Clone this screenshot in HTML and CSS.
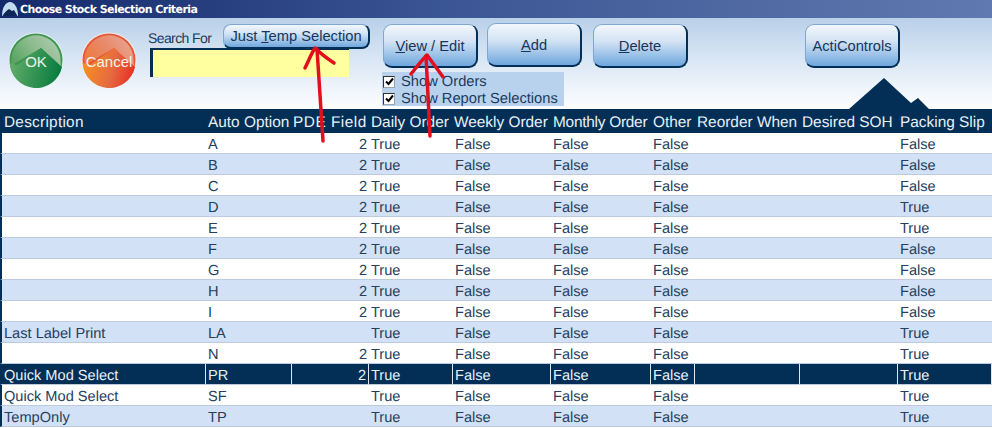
FILE: index.html
```html
<!DOCTYPE html>
<html lang="en">
<head>
<meta charset="utf-8">
<title>Choose Stock Selection Criteria</title>
<link rel="stylesheet" href="styles.css">
</head>
<body>
<div class="window">
  <div class="titlebar">
    <svg class="app-icon" width="18" height="16" viewBox="0 0 18 16"><path d="M1 15C1 6 5 1 9 1s8 5 8 14z" fill="#c3dbef"/><path d="M1.500 15C3 12 5 10 8 8l3 2 2-1 3.500 6z" fill="#0c2658"/></svg>
    <span class="title-text">Choose Stock Selection Criteria</span>
  </div>
  <div class="toolbar">
    <button class="round ok">
      <svg class="round-art" width="56" height="56" viewBox="0 0 56 56">
        <defs>
          <linearGradient id="okBase" x1="0" y1="0.5" x2="1" y2="0.7"><stop offset="0" stop-color="#62ad68"/><stop offset="0.55" stop-color="#2d9050"/><stop offset="1" stop-color="#04793e"/></linearGradient>
          <linearGradient id="okGloss" x1="0" y1="0.7" x2="1" y2="0.2"><stop offset="0" stop-color="#5aa562"/><stop offset="0.5" stop-color="#8ebc90"/><stop offset="1" stop-color="#aecbae"/></linearGradient>
        </defs>
        <circle cx="28" cy="28" r="27.500" fill="#e6eff6"/>
        <circle cx="28" cy="28" r="26.500" fill="#3f9650"/>
        <path d="M8.500 13A24.500 24.500 0 0 1 52.500 28L53 35 33 16 4 33A24.500 24.500 0 0 1 8.500 13z" fill="url(#okGloss)"/>
        <path d="M33 16L54 35A26.500 26.500 0 0 1 1.600 31L9 33z" fill="url(#okBase)"/>
      </svg>
      <span class="round-label">OK</span>
    </button>
    <button class="round cancel">
      <svg class="round-art" width="56" height="56" viewBox="0 0 56 56">
        <defs>
          <linearGradient id="noBase" x1="0" y1="0.5" x2="1" y2="0.7"><stop offset="0" stop-color="#f69020"/><stop offset="0.55" stop-color="#e66a40"/><stop offset="1" stop-color="#e62c24"/></linearGradient>
          <linearGradient id="noGloss" x1="0" y1="0.7" x2="1" y2="0.2"><stop offset="0" stop-color="#ee7a3c"/><stop offset="0.5" stop-color="#e88a6c"/><stop offset="1" stop-color="#e8a894"/></linearGradient>
        </defs>
        <circle cx="28" cy="28" r="27.500" fill="#f2eeee"/>
        <circle cx="28" cy="28" r="26.500" fill="#e4583a"/>
        <path d="M8.500 13A24.500 24.500 0 0 1 52.500 28L53 35 33 16 4 33A24.500 24.500 0 0 1 8.500 13z" fill="url(#noGloss)"/>
        <path d="M33 16L54 35A26.500 26.500 0 0 1 1.600 31L9 33z" fill="url(#noBase)"/>
      </svg>
      <span class="round-label">Cancel</span>
    </button>
    <div class="search">
      <div class="search-top">
        <label class="search-label">Search For</label>
        <button class="btn small">Just <u>T</u>emp Selection</button>
      </div>
      <div class="search-input"></div>
    </div>
    <div class="middle">
      <div class="btn-row">
        <button class="btn big"><u>V</u>iew / Edit</button>
        <button class="btn big raised"><u>A</u>dd</button>
        <button class="btn big delete"><u>D</u>elete</button>
      </div>
      <div class="checks">
        <div class="check"><span class="box"><svg width="9" height="9" viewBox="0 0 9 9"><path d="M1 4.500l2.500 2.500L8 1.500" fill="none" stroke="#000" stroke-width="2"/></svg></span>Show Orders</div>
        <div class="check"><span class="box"><svg width="9" height="9" viewBox="0 0 9 9"><path d="M1 4.500l2.500 2.500L8 1.500" fill="none" stroke="#000" stroke-width="2"/></svg></span>Show Report Selections</div>
      </div>
    </div>
    <button class="btn big acti">ActiControls</button>
    <svg class="mountain" width="82" height="32" viewBox="0 0 82 32"><path d="M0 32L35 1 62 26 69 21 80 32z" fill="#032f56"/></svg>
  </div>
  <table class="grid">
    <colgroup>
      <col class="c1"><col class="c2"><col class="c3"><col class="c4"><col class="c5"><col class="c6"><col class="c7"><col class="c8"><col class="c9"><col class="c10">
    </colgroup>
    <thead>
      <tr><th>Description</th><th>Auto Option</th><th>PDE Field</th><th>Daily Order</th><th>Weekly Order</th><th>Monthly Order</th><th>Other</th><th>Reorder When</th><th>Desired SOH</th><th>Packing Slip</th></tr>
    </thead>
    <tbody>
      <tr><td></td><td>A</td><td class="num">2</td><td>True</td><td>False</td><td>False</td><td>False</td><td></td><td></td><td>False</td></tr>
      <tr><td></td><td>B</td><td class="num">2</td><td>True</td><td>False</td><td>False</td><td>False</td><td></td><td></td><td>False</td></tr>
      <tr><td></td><td>C</td><td class="num">2</td><td>True</td><td>False</td><td>False</td><td>False</td><td></td><td></td><td>False</td></tr>
      <tr><td></td><td>D</td><td class="num">2</td><td>True</td><td>False</td><td>False</td><td>False</td><td></td><td></td><td>True</td></tr>
      <tr><td></td><td>E</td><td class="num">2</td><td>True</td><td>False</td><td>False</td><td>False</td><td></td><td></td><td>True</td></tr>
      <tr><td></td><td>F</td><td class="num">2</td><td>True</td><td>False</td><td>False</td><td>False</td><td></td><td></td><td>False</td></tr>
      <tr><td></td><td>G</td><td class="num">2</td><td>True</td><td>False</td><td>False</td><td>False</td><td></td><td></td><td>False</td></tr>
      <tr><td></td><td>H</td><td class="num">2</td><td>True</td><td>False</td><td>False</td><td>False</td><td></td><td></td><td>False</td></tr>
      <tr><td></td><td>I</td><td class="num">2</td><td>True</td><td>False</td><td>False</td><td>False</td><td></td><td></td><td>False</td></tr>
      <tr><td>Last Label Print</td><td>LA</td><td class="num"></td><td>True</td><td>False</td><td>False</td><td>False</td><td></td><td></td><td>True</td></tr>
      <tr><td></td><td>N</td><td class="num">2</td><td>True</td><td>False</td><td>False</td><td>False</td><td></td><td></td><td>True</td></tr>
      <tr class="selected"><td>Quick Mod Select</td><td>PR</td><td class="num">2</td><td>True</td><td>False</td><td>False</td><td>False</td><td></td><td></td><td>True</td></tr>
      <tr><td>Quick Mod Select</td><td>SF</td><td class="num"></td><td>True</td><td>False</td><td>False</td><td>False</td><td></td><td></td><td>True</td></tr>
      <tr><td>TempOnly</td><td>TP</td><td class="num"></td><td>True</td><td>False</td><td>False</td><td>False</td><td></td><td></td><td>True</td></tr>
    </tbody>
  </table>
  <svg class="arrows" width="992" height="428" viewBox="0 0 992 428">
    <g fill="none" stroke="#e20f1e" stroke-width="3.500" stroke-linecap="round" stroke-linejoin="round">
      <path d="M323 141L317 49"/>
      <path d="M305 68C309 60 311 54 315 48C321 54 328 59 334 63"/>
      <path d="M430 136L426 56"/>
      <path d="M411 74C416 68 421 61 427 55C432 62 438 70 443 77"/>
    </g>
  </svg>
</div>
</body>
</html>
```
FILE: styles.css
```css
* { box-sizing: border-box; }
html, body { margin: 0; padding: 0; }
body { width: 992px; height: 428px; overflow: hidden; font-family: "Liberation Sans", Arial, sans-serif; background: #fff; text-rendering: geometricPrecision; }
.window { position: relative; width: 992px; height: 428px; overflow: hidden; }

.titlebar { height: 18px; display: flex; align-items: center; padding-left: 1px; gap: 1px; background: linear-gradient(90deg, #14296b 0%, #3b5694 45%, #6079b0 100%); }
.title-text { color: #fff; font: bold 11px "DejaVu Sans", sans-serif; letter-spacing: -0.58px; }

.toolbar { position: relative; height: 91px; display: flex; align-items: flex-start; background: linear-gradient(180deg, #b9d0e9 0%, #d9e6f4 45%, #fdfeff 100%); }

.round { display: grid; place-items: center; width: 56px; height: 56px; margin-top: 14px; border: 0; padding: 0; background: none; flex: none; }
.round-art, .round-label { grid-area: 1 / 1; }
.round-label { font: 15px "Liberation Sans", sans-serif; color: #eef5ee; margin-top: 3px; z-index: 1; white-space: nowrap; }
.ok { margin-left: 8px; }
.cancel { margin-left: 17px; }

.search { margin-left: 11px; width: 222px; flex: none; }
.search-top { display: flex; align-items: flex-start; }
.search-label { margin-top: 12px; width: 75px; font-size: 14px; letter-spacing: -0.6px; color: #1a3a5c; white-space: nowrap; }
.search-input { width: 199px; height: 29px; margin-top: -1px; margin-left: 2px; background: #ffff9f; border-top: 2px solid #032f56; border-left: 3px solid #032f56; }

.btn { border: 1px solid #7fa6cf; border-right: 2px solid #032f56; border-bottom: 2px solid #032f56; background: linear-gradient(180deg, #f2f7fc 0%, #d3e3f4 40%, #6fa7de 100%); color: #17365a; font: 14.7px "Liberation Sans", sans-serif; padding: 0; flex: none; }
.btn.small { width: 147px; height: 25px; margin-top: 6px; border-radius: 8px; }
.btn.big { width: 95px; height: 44px; border-radius: 9px; }

.middle { margin-left: 13px; padding-top: 6px; flex: none; }
.btn-row { display: flex; gap: 9px; align-items: flex-start; }
.btn.raised { margin-top: -1px; }
.btn.delete { margin-left: 2px; }
.acti.btn { margin-top: 6px; margin-left: 117px; }

.checks { margin-top: 4px; margin-left: -1px; width: 182px; height: 34px; padding-top: 1px; background: #b8d2ee; font-size: 14.7px; color: #1a3a5c; }
.check { display: flex; align-items: center; height: 17px; white-space: nowrap; }
.box { width: 12px; height: 12px; margin-right: 6px; margin-left: 1px; background: #fff; border: 1px solid #9aa5b0; border-top-color: #333; border-left-color: #333; display: flex; align-items: center; justify-content: center; }

.mountain { position: absolute; left: 849px; bottom: 0; }

.grid { width: 992px; table-layout: fixed; border-collapse: separate; border-spacing: 0; font-size: 14.6px; }
.c1 { width: 206px; } .c2 { width: 86px; } .c3 { width: 77px; } .c4 { width: 84px; } .c5 { width: 98px; }
.c6 { width: 100px; } .c7 { width: 44px; } .c8 { width: 105px; } .c9 { width: 98px; } .c10 { width: 94px; }
.grid th { height: 24px; background: #032f56; color: #e8eff6; font-size: 15.4px; font-weight: normal; text-align: left; padding: 3px 0 0 2px; line-height: 20px; white-space: nowrap; overflow: visible; }
.grid th:first-child { padding-left: 4px; letter-spacing: 0.25px; }
.grid th:nth-child(3) { padding-left: 1px; letter-spacing: 0.5px; }
.grid th:nth-child(5) { padding-left: 1px; }
.grid th:nth-child(6) { letter-spacing: -0.25px; }
.grid td { height: 21px; padding: 4px 0 0 2px; line-height: 16px; color: #24405e; white-space: nowrap; border-bottom: 1px solid #bccbde; }
.grid td:first-child { padding-left: 2px; border-left: 2px solid #032f56; }
.grid td.num { text-align: right; padding-right: 2px; }
.grid tbody tr:nth-child(even) td { background: #d2e1f5; }
.grid tbody tr.selected td { background: #032f56; color: #e8eff6; border-right: 1px solid #dce6f2; }
.grid tbody tr.selected td:first-child { border-left-color: #032f56; }

.arrows { position: absolute; left: 0; top: 0; pointer-events: none; }
```
